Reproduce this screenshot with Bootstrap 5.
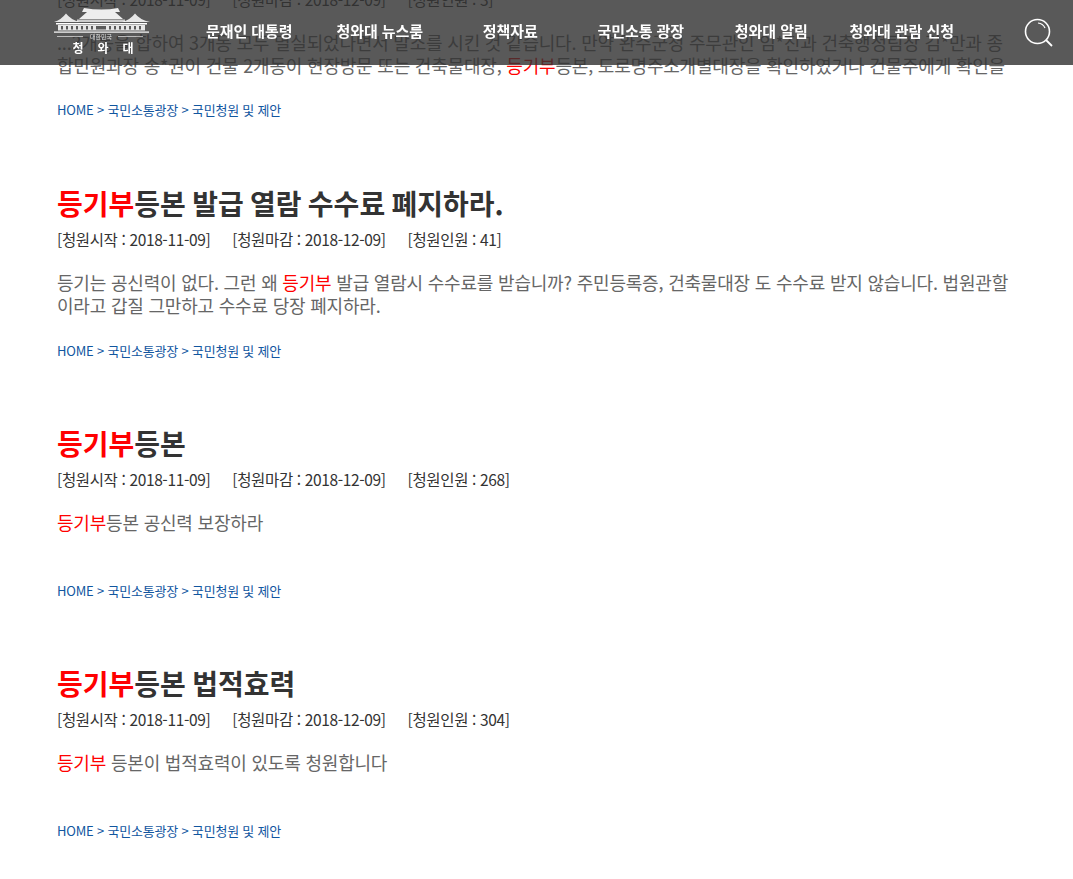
<!DOCTYPE html>
<html lang="ko">
<head>
    <meta charset="UTF-8" />
    <meta name="viewport" content="width=device-width, initial-scale=1.0" />
    <title>청와대 통합검색</title>
    <link href="https://cdn.jsdelivr.net/npm/bootstrap@5.3.0/dist/css/bootstrap.min.css" rel="stylesheet" />
    <style>
        body {
            font-family: "Noto Sans CJK KR", "Noto Sans", sans-serif;
            background: #fff;
            overflow: hidden;
        }

        .top-bar {
            height: 65px;
            background: rgba(51, 51, 51, 0.81);
        }

        .top-logo {
            width: 100px;
            margin-left: 53px;
        }

        .top-menu {
            width: 783px;
            margin-left: 31px;
            margin-top: -2px;
        }

        .top-menu a {
            flex: 1 1 0;
            text-align: center;
            color: #fff;
            font-size: 15px;
            font-weight: 700;
            letter-spacing: -0.05px;
            text-decoration: none;
            white-space: nowrap;
        }

        .search-icon {
            margin-right: 19px;
        }

        .result-list {
            margin-top: -13px;
            padding: 0 57px;
        }

        .result-item {
            height: 240px;
        }

        .result-item.first-item {
            height: 194px;
        }

        .result-title {
            font-size: 28px;
            font-weight: 700;
            line-height: 40px;
            word-spacing: -1.500px;
            color: #333;
            margin: 0;
            padding-top: 2px;
        }

        .result-meta {
            font-size: 15.5px;
            line-height: 24px;
            letter-spacing: -0.36px;
            color: #333;
            gap: 22px;
            margin-top: 4px;
        }

        .result-text {
            font-size: 18px;
            line-height: 23px;
            letter-spacing: -0.2px;
            color: #666;
            margin: 20px 0 0;
            height: 46px;
        }

        .result-path {
            display: block;
            font-size: 13px;
            line-height: 20px;
            letter-spacing: -0.2px;
            color: #11569f;
            text-decoration: none;
            margin-top: 24px;
        }

        .first-item .result-path {
            margin-top: 23px;
        }

        .hit {
            color: #f00;
        }
    </style>
</head>
<body>
    <!-- 상단 메뉴 -->
    <header class="top-bar fixed-top d-flex align-items-center">
        <svg class="top-logo flex-shrink-0" viewBox="0 0 100 56" height="56" fill="#fff">
            <path d="M31 3 Q49 6 65 3 L67 7 L62 7 L70 14 L26 14 L34 7 L29 7 Z" opacity=".9"/>
            <path d="M1 17 Q8 15 13 8.500 Q18 15 27 17 Z" opacity=".85"/>
            <path d="M69 17 Q77 15 82 8.500 Q87 15 97 17 Z" opacity=".85"/>
            <rect x="24" y="14.500" width="48" height="2.500" opacity=".7"/>
            <rect x="3" y="18" width="91" height="1.500"/>
            <path fill-rule="evenodd" opacity=".85" d="M5 20h87v5.500h-87z M8 21v3.500h2v-3.500z M13 21v3.500h2v-3.500z M18 21v3.500h2v-3.500z M23 21v3.500h2v-3.500z M28 21v3.500h2v-3.500z M33 21v3.500h2v-3.500z M38 21v3.500h2v-3.500z M43 21v3.500h10v-3.500z M56 21v3.500h2v-3.500z M61 21v3.500h2v-3.500z M66 21v3.500h2v-3.500z M71 21v3.500h2v-3.500z M76 21v3.500h2v-3.500z M81 21v3.500h2v-3.500z M86 21v3.500h2v-3.500z"/>
            <rect x="1" y="26.500" width="95" height="1.200"/>
            <path d="M4 31h26v.7H4zM65 31h25v.7H65z" opacity=".8"/>
            <text x="48" y="33.500" font-size="6" text-anchor="middle" opacity=".8">대한민국</text>
            <text x="25" y="47.500" font-size="12" font-weight="700" text-anchor="middle">청</text>
            <text x="50" y="47.500" font-size="12" font-weight="700" text-anchor="middle">와</text>
            <text x="75" y="47.500" font-size="12" font-weight="700" text-anchor="middle">대</text>
        </svg>
        <nav class="top-menu d-flex">
            <a href="#">문재인 대통령</a>
            <a href="#">청와대 뉴스룸</a>
            <a href="#">정책자료</a>
            <a href="#">국민소통 광장</a>
            <a href="#">청와대 알림</a>
            <a href="#">청와대 관람 신청</a>
        </nav>
        <svg class="search-icon flex-shrink-0 ms-auto" width="30" height="30" viewBox="0 0 30 30" fill="none" stroke="#fff">
            <circle cx="13.500" cy="13.500" r="12" stroke-width="1.600"/>
            <path d="M22 22 L28 28" stroke-width="1.800"/>
            <path d="M14 5 Q19 5.500 21 10" stroke-width="1.200"/>
        </svg>
    </header>

    <!-- 검색 결과 -->
    <main class="result-list">
        <section class="result-item first-item">
            <div class="result-meta d-flex mt-0">
                <span>[청원시작 : 2018-11-09]</span><span>[청원마감 : 2018-12-09]</span><span>[청원인원 : 3]</span>
            </div>
            <p class="result-text">...3개동을 합하여 3개동 모두 멸실되었다면서 말소를 시킨 것 같습니다. 만약 완주군청 주무관인 임*진과 건축행정팀장 김*만과 종합민원과장 송*권이 건물 2개동이 현장방문 또는 건축물대장, <span class="hit">등기부</span>등본, 도로명주소개별대장을 확인하였거나 건물주에게 확인을</p>
            <a href="#" class="result-path">HOME &gt; 국민소통광장 &gt; 국민청원 및 제안</a>
        </section>

        <section class="result-item">
            <h3 class="result-title"><span class="hit">등기부</span>등본 발급 열람 수수료 폐지하라.</h3>
            <div class="result-meta d-flex">
                <span>[청원시작 : 2018-11-09]</span><span>[청원마감 : 2018-12-09]</span><span>[청원인원 : 41]</span>
            </div>
            <p class="result-text">등기는 공신력이 없다. 그런 왜 <span class="hit">등기부</span> 발급 열람시 수수료를 받습니까? 주민등록증, 건축물대장 도 수수료 받지 않습니다. 법원관할이라고 갑질 그만하고 수수료 당장 폐지하라.</p>
            <a href="#" class="result-path">HOME &gt; 국민소통광장 &gt; 국민청원 및 제안</a>
        </section>

        <section class="result-item">
            <h3 class="result-title"><span class="hit">등기부</span>등본</h3>
            <div class="result-meta d-flex">
                <span>[청원시작 : 2018-11-09]</span><span>[청원마감 : 2018-12-09]</span><span>[청원인원 : 268]</span>
            </div>
            <p class="result-text"><span class="hit">등기부</span>등본 공신력 보장하라</p>
            <a href="#" class="result-path">HOME &gt; 국민소통광장 &gt; 국민청원 및 제안</a>
        </section>

        <section class="result-item">
            <h3 class="result-title"><span class="hit">등기부</span>등본 법적효력</h3>
            <div class="result-meta d-flex">
                <span>[청원시작 : 2018-11-09]</span><span>[청원마감 : 2018-12-09]</span><span>[청원인원 : 304]</span>
            </div>
            <p class="result-text"><span class="hit">등기부</span> 등본이 법적효력이 있도록 청원합니다</p>
            <a href="#" class="result-path">HOME &gt; 국민소통광장 &gt; 국민청원 및 제안</a>
        </section>
    </main>
</body>
</html>
